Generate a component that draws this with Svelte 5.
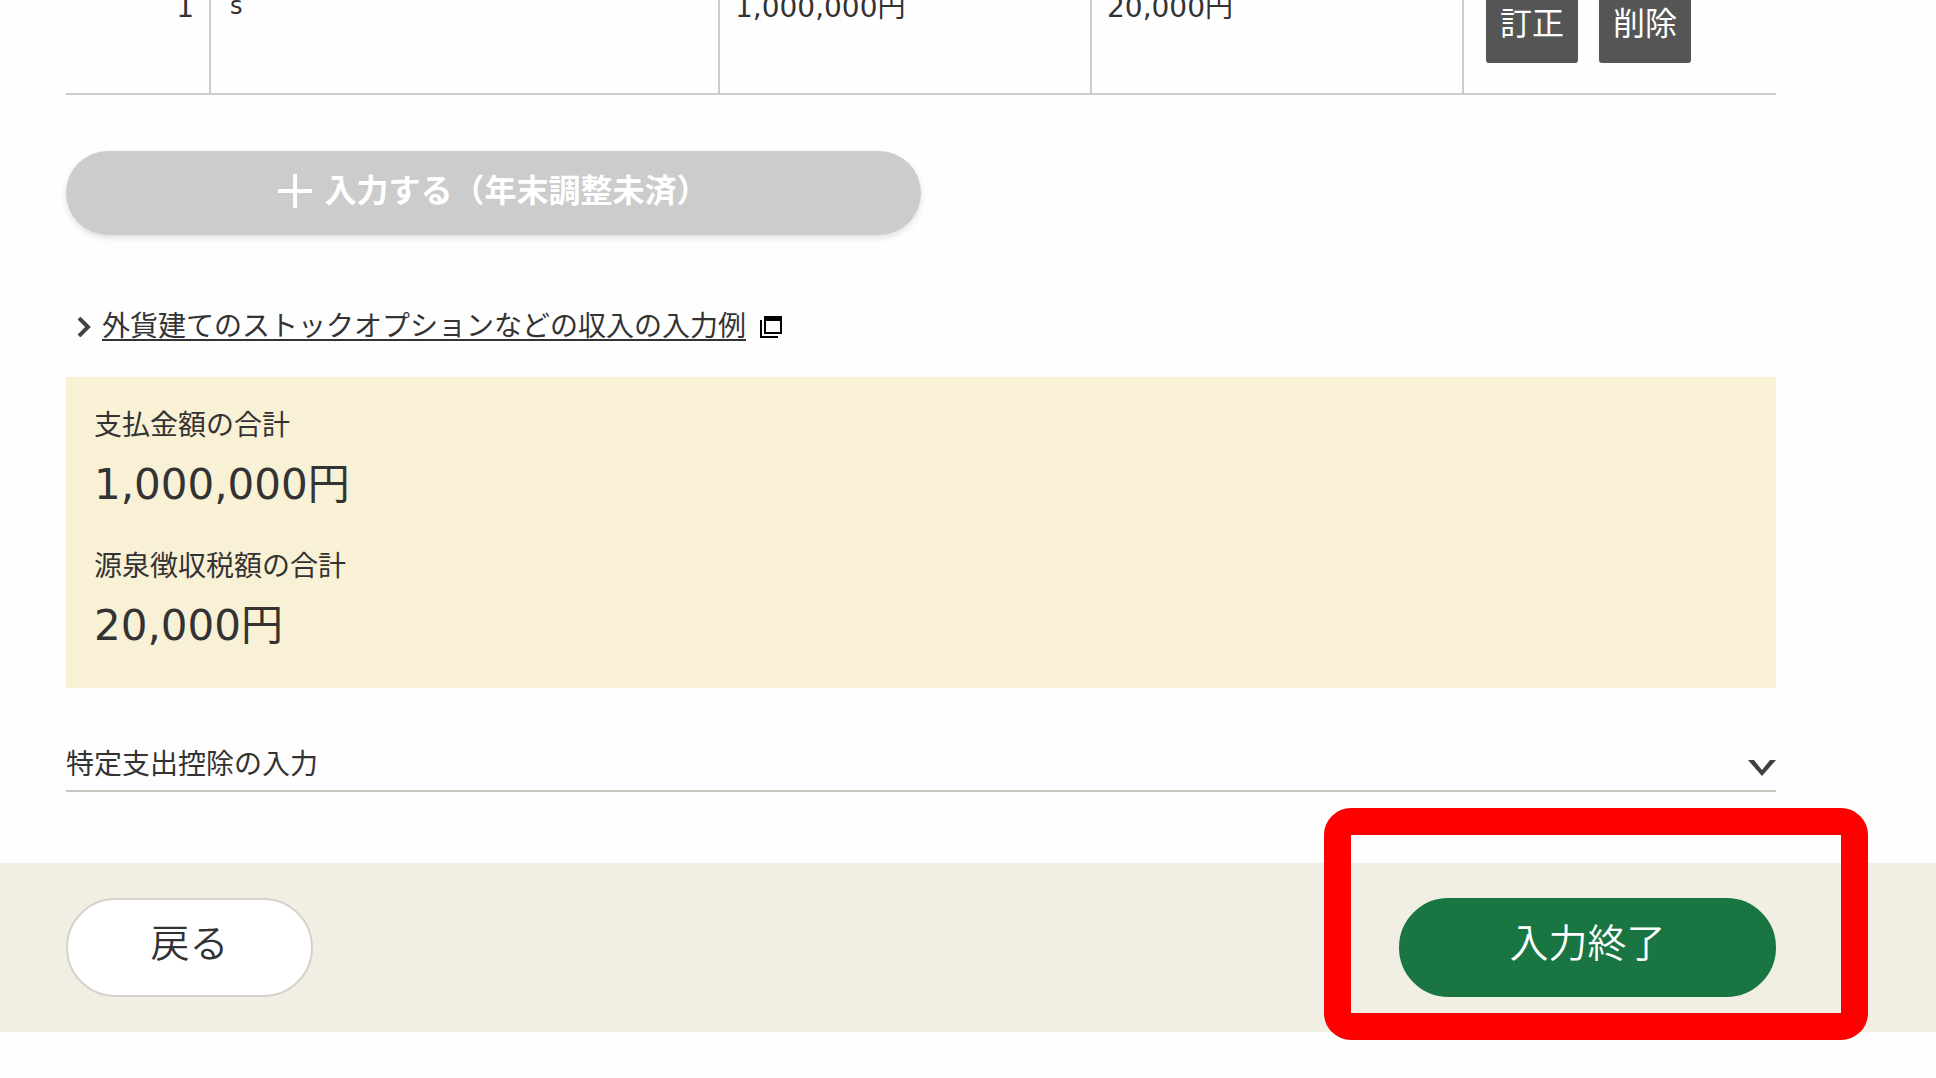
<script lang="ts">
  type Payment = { id: number; payer: string; amount: number; tax: number };

  let payments: Payment[] = $state([{ id: 1, payer: 's', amount: 1000000, tax: 20000 }]);
  let detailOpen = $state(false);

  let totals = $derived([
    { label: '支払金額の合計', value: payments.reduce((sum, p) => sum + p.amount, 0) },
    { label: '源泉徴収税額の合計', value: payments.reduce((sum, p) => sum + p.tax, 0) },
  ]);

  const yen = (value: number) => `${value.toLocaleString('en-US')}円`;

  function remove(id: number) {
    payments = payments.filter((p) => p.id !== id);
  }
</script>

<div class="page">
  <main class="content">
    <table class="payments">
      <colgroup>
        <col class="col-no" />
        <col class="col-payer" />
        <col class="col-amount" />
        <col class="col-amount" />
        <col />
      </colgroup>
      <tbody>
        {#each payments as payment (payment.id)}
          <tr>
            <td class="no">{payment.id}</td>
            <td class="payer">{payment.payer}</td>
            <td>{yen(payment.amount)}</td>
            <td>{yen(payment.tax)}</td>
            <td class="actions">
              <div class="action-list">
                <button type="button" class="small-button">訂正</button>
                <button type="button" class="small-button" onclick={() => remove(payment.id)}>削除</button>
              </div>
            </td>
          </tr>
        {/each}
      </tbody>
    </table>

    <button type="button" class="add-button" disabled>
      <svg class="plus" viewBox="0 0 34 34" aria-hidden="true">
        <path d="M17 0V34M0 17H34" fill="none" stroke="currentColor" stroke-width="4" />
      </svg>
      <span>入力する（年末調整未済）</span>
    </button>

    <p class="example">
      <svg class="arrow" viewBox="0 0 14 20" aria-hidden="true">
        <path d="M2 1L11 10L2 19" fill="none" stroke="#444" stroke-width="4" />
      </svg>
      <a href="#example">外貨建てのストックオプションなどの収入の入力例</a>
      <svg class="window" viewBox="0 0 22 22" aria-hidden="true">
        <path d="M1 4V21H18" fill="none" stroke="#000" stroke-width="2" />
        <path d="M5 1H21V17H5Z" fill="none" stroke="#000" stroke-width="2" />
        <path d="M4 0H22V5H4Z" fill="#000" />
      </svg>
    </p>

    <dl class="totals">
      {#each totals as total}
        <div class="total">
          <dt>{total.label}</dt>
          <dd>{yen(total.value)}</dd>
        </div>
      {/each}
    </dl>

    <button
      type="button"
      class="accordion"
      aria-expanded={detailOpen}
      onclick={() => (detailOpen = !detailOpen)}
    >
      <span>特定支出控除の入力</span>
      <svg class="chevron" class:open={detailOpen} viewBox="0 0 28 18" aria-hidden="true">
        <path d="M0 1H6L14 11L22 1H28L14 17Z" fill="#404040" />
      </svg>
    </button>
  </main>

  <footer class="footer">
    <button type="button" class="nav-button back">戻る</button>
    <div class="finish-wrap">
      <button type="button" class="nav-button finish">入力終了</button>
      <div class="highlight"></div>
    </div>
  </footer>
</div>

<style>
  :global(body) {
    margin: 0;
    background: #fefefe;
  }

  .page {
    display: flow-root;
    padding-bottom: 40px;
    color: #333;
    font-family: 'DejaVu Sans', 'Noto Sans CJK JP', sans-serif;
    font-size: 28px;
    line-height: 40px;
  }

  button {
    font-family: inherit;
    cursor: pointer;
  }

  .content {
    padding: 0 160px 0 66px;
  }

  /* the row is scrolled partly out of view */
  .payments {
    width: 100%;
    margin-top: -32px;
    border-collapse: collapse;
    table-layout: fixed;
  }

  .col-no {
    width: 144px;
  }

  .col-payer {
    width: 509px;
  }

  .col-amount {
    width: 372px;
  }

  td {
    padding: 20px 15px 28px;
    border-bottom: 2px solid #ccc;
    border-left: 2px solid #ccc;
    vertical-align: top;
  }

  td.no {
    border-left: none;
    text-align: right;
  }

  td.payer {
    padding-left: 19px;
    font-size: 24px;
    line-height: 36px;
  }

  td.actions {
    padding: 20px 22px 30px;
  }

  .action-list {
    display: flex;
    gap: 21px;
  }

  .small-button {
    width: 92px;
    padding: 16px 0 19px;
    border: none;
    border-radius: 3px;
    background: #555;
    color: #fff;
    font-size: 32px;
    line-height: 40px;
  }

  .add-button {
    display: flex;
    justify-content: center;
    align-items: center;
    gap: 12px;
    width: 50%;
    margin-top: 56px;
    padding: 20px 0 24px;
    border: none;
    border-radius: 42px;
    background: #ccc;
    box-shadow: 0 3px 6px rgba(0, 0, 0, 0.12);
    color: #fff;
    font-size: 32px;
    font-weight: 700;
    line-height: 40px;
    cursor: default;
  }

  .plus {
    width: 34px;
    height: 34px;
  }

  .example {
    display: flex;
    align-items: center;
    margin: 72px 0 0;
    padding-left: 11px;
  }

  .arrow {
    width: 14px;
    height: 20px;
    margin-right: 11px;
  }

  .example a {
    color: #333;
    text-decoration: underline;
    text-decoration-thickness: 2px;
    text-underline-offset: 3px;
  }

  .window {
    width: 22px;
    height: 22px;
    margin-left: 14px;
  }

  .totals {
    margin: 30px 0 0;
    padding: 29px 28px 32px;
    background: #f9f1d6;
  }

  .total + .total {
    margin-top: 32px;
  }

  dd {
    margin: 9px 0 0;
    font-size: 42px;
    line-height: 60px;
  }

  .accordion {
    display: flex;
    justify-content: space-between;
    align-items: flex-end;
    width: 100%;
    margin-top: 57px;
    padding: 0 0 5px;
    border: none;
    border-bottom: 2px solid #c9c5be;
    background: none;
    color: inherit;
    font-size: 28px;
    line-height: 40px;
  }

  .chevron {
    width: 28px;
    height: 18px;
    margin-bottom: 8px;
  }

  .chevron.open {
    transform: rotate(180deg);
  }

  .footer {
    display: flex;
    justify-content: space-between;
    margin-top: 71px;
    padding: 35px 160px 35px 66px;
    background: #f1efe3;
  }

  .nav-button {
    padding: 20px 0 27px;
    border: 2px solid #d6d1ca;
    border-radius: 50px;
    background: #fff;
    color: #333;
    font-size: 39px;
    font-weight: 350;
    line-height: 48px;
  }

  .back {
    width: 247px;
  }

  .finish-wrap {
    position: relative;
  }

  .finish {
    width: 377px;
    border-color: #197642;
    background: #197642;
    color: #fff;
  }

  .highlight {
    position: absolute;
    inset: -90px -92px -43px -75px;
    border: 27px solid #f00;
    border-radius: 27px;
    pointer-events: none;
  }
</style>
